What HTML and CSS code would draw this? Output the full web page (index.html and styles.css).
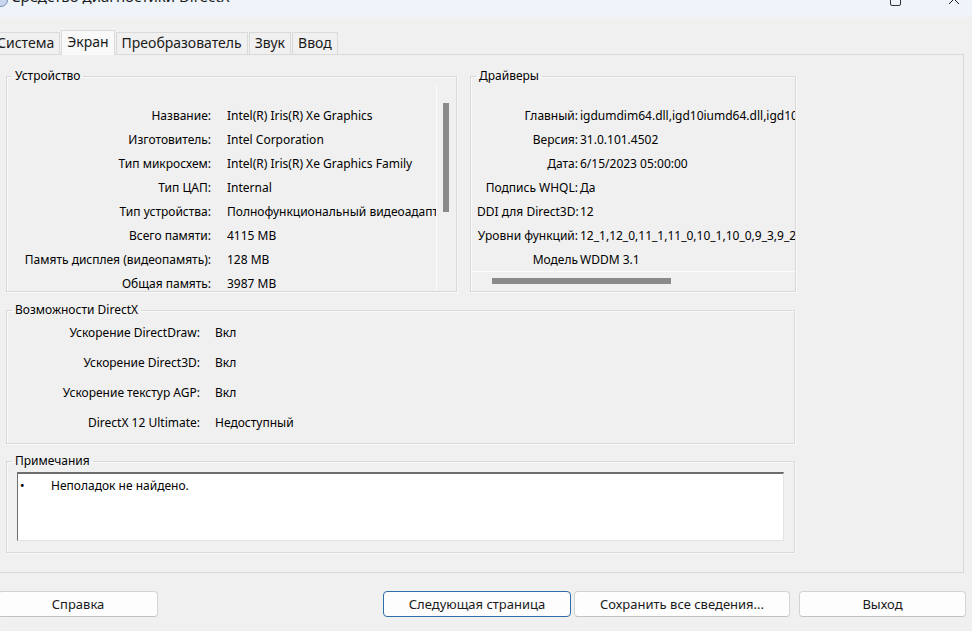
FILE: index.html
```html
<!DOCTYPE html>
<html lang="ru">
<head>
    <meta charset="UTF-8">
    <title>Средство диагностики DirectX</title>
    <link rel="stylesheet" href="styles.css">
</head>
<body>
    <div class="titlebar">
        <span class="app-icon"></span>
        <span class="title">Средство диагностики DirectX</span>
        <div class="controls">
            <span class="max-btn"></span>
            <svg class="close-btn" width="12" height="12" viewBox="0 0 12 12"><path d="M1 1 L11 11 M11 1 L1 11" stroke="#1a1a1a" stroke-width="1"/></svg>
        </div>
    </div>

    <div class="tabs">
        <div class="tab">Система</div>
        <div class="tab selected">Экран</div>
        <div class="tab">Преобразователь</div>
        <div class="tab">Звук</div>
        <div class="tab">Ввод</div>
    </div>

    <div class="panel">
        <div class="top-row">
            <fieldset class="group device">
                <legend>Устройство</legend>
                <div class="scroll-wrap">
                    <div class="list device-list">
                        <div class="row"><span class="label">Название:</span><span class="value">Intel(R) Iris(R) Xe Graphics</span></div>
                        <div class="row"><span class="label">Изготовитель:</span><span class="value">Intel Corporation</span></div>
                        <div class="row"><span class="label">Тип микросхем:</span><span class="value">Intel(R) Iris(R) Xe Graphics Family</span></div>
                        <div class="row"><span class="label">Тип ЦАП:</span><span class="value">Internal</span></div>
                        <div class="row"><span class="label">Тип устройства:</span><span class="value">Полнофункциональный видеоадаптер</span></div>
                        <div class="row"><span class="label">Всего памяти:</span><span class="value">4115 MB</span></div>
                        <div class="row"><span class="label">Память дисплея (видеопамять):</span><span class="value">128 MB</span></div>
                        <div class="row"><span class="label">Общая память:</span><span class="value">3987 MB</span></div>
                    </div>
                    <div class="vscroll"><div class="thumb"></div></div>
                </div>
            </fieldset>

            <fieldset class="group drivers">
                <legend>Драйверы</legend>
                <div class="list driver-list">
                    <div class="row"><span class="label">Главный:</span><span class="value">igdumdim64.dll,igd10iumd64.dll,igd10iumd64.dll</span></div>
                    <div class="row"><span class="label">Версия:</span><span class="value">31.0.101.4502</span></div>
                    <div class="row"><span class="label">Дата:</span><span class="value">6/15/2023 05:00:00</span></div>
                    <div class="row"><span class="label">Подпись WHQL:</span><span class="value">Да</span></div>
                    <div class="row"><span class="label">DDI для Direct3D:</span><span class="value">12</span></div>
                    <div class="row"><span class="label">Уровни функций:</span><span class="value">12_1,12_0,11_1,11_0,10_1,10_0,9_3,9_2,9_1</span></div>
                    <div class="row"><span class="label">Модель</span><span class="value">WDDM 3.1</span></div>
                </div>
                <div class="hscroll"><div class="thumb"></div></div>
            </fieldset>
        </div>

        <fieldset class="group dx">
            <legend>Возможности DirectX</legend>
            <div class="dx-list">
                <div class="row"><span class="label">Ускорение DirectDraw:</span><span class="value">Вкл</span></div>
                <div class="row"><span class="label">Ускорение Direct3D:</span><span class="value">Вкл</span></div>
                <div class="row"><span class="label">Ускорение текстур AGP:</span><span class="value">Вкл</span></div>
                <div class="row"><span class="label">DirectX 12 Ultimate:</span><span class="value">Недоступный</span></div>
            </div>
        </fieldset>

        <fieldset class="group notes">
            <legend>Примечания</legend>
            <div class="notes-box">
                <div class="note"><span class="bullet">•</span>Неполадок не найдено.</div>
            </div>
        </fieldset>
    </div>

    <div class="buttons">
        <button class="btn help">Справка</button>
        <div class="btn-group">
            <button class="btn next">Следующая страница</button>
            <button class="btn save">Сохранить все сведения...</button>
            <button class="btn exit">Выход</button>
        </div>
    </div>
</body>
</html>
```

FILE: styles.css
```css
body{
    margin: 0;
    background-color: #f0f0f0;
    color: #000;
    font-family: "Noto Sans", "Liberation Sans", sans-serif;
    font-size: 12px;
    overflow: hidden;
}
.titlebar{
    height: 17px;
    background-color: #eef4f9;
    display: flex;
    align-items: flex-start;
    overflow: hidden;
}
.app-icon{
    width: 12px;
    height: 12px;
    margin-left: -6px;
    margin-top: -7px;
    border-radius: 50%;
    border: 1px solid #7a8fb3;
    background-color: #c9d6ee;
}
.title{
    font-size: 15px;
    line-height: 20px;
    margin-top: -14px;
    margin-left: 3px;
    color: #1c1c1c;
}
.controls{
    margin-left: auto;
    display: flex;
    align-items: flex-start;
}
.max-btn{
    width: 9px;
    height: 9px;
    margin-top: -5px;
    border: 1px solid #333;
    border-radius: 2px;
    margin-right: 47px;
}
.close-btn{
    margin-top: -7px;
    margin-right: 12px;
}
.tabs{
    display: flex;
    align-items: flex-end;
    margin-top: 13px;
    margin-left: -9px;
    height: 24px;
    position: relative;
    z-index: 1;
}
.tab{
    height: 21px;
    line-height: 20px;
    padding: 0 5px;
    font-size: 14px;
    border: 1px solid #dadada;
    border-bottom: none;
    margin-right: 1px;
    color: #1a1a1a;
    background-color: #f0f0f0;
}
.tab.selected{
    height: 24px;
    line-height: 22px;
    background-color: #f9f9f9;
    margin-bottom: -1px;
}
.panel{
    margin: 0 8px 0 -1px;
    border: 1px solid #d9d9d9;
    padding: 13px 6px 19px 6px;
}
.top-row{
    display: flex;
    gap: 13px;
}
.group{
    margin: 0;
    padding: 0;
    border: 1px solid #d8d8d8;
    box-shadow: 1px 1px 0 #fafafa, inset 1px 1px 0 #fafafa;
    min-width: 0;
}
.group legend{
    margin-left: 5px;
    padding: 0 3px;
    line-height: 16px;
}
.device{
    width: 449px;
}
.drivers{
    width: 324px;
}
.scroll-wrap{
    display: flex;
    height: 207px;
}
.list{
    overflow: hidden;
    white-space: nowrap;
    padding-top: 19px;
    box-sizing: border-box;
}
.device-list{
    flex: 1;
    padding-left: 1px;
}
.row{
    display: flex;
    height: 24px;
    align-items: center;
}
.label{
    text-align: right;
    flex-shrink: 0;
}
.device-list .label{
    width: 203px;
    margin-right: 16px;
}
.vscroll{
    width: 19px;
    border-left: 1px solid #fbfbfb;
}
.vscroll .thumb{
    width: 6px;
    height: 109px;
    margin: 19px 0 0 6px;
    background-color: #8a8a8a;
}
.driver-list{
    height: 187px;
    padding-left: 6px;
}
.driver-list .label{
    width: 101px;
    margin-right: 2px;
}
.hscroll{
    height: 20px;
    border-top: 1px solid #fbfbfb;
    box-sizing: border-box;
    padding-top: 6px;
}
.hscroll .thumb{
    width: 179px;
    height: 6px;
    margin-left: 21px;
    background-color: #8a8a8a;
}
.dx{
    width: 787px;
    margin-top: 10px;
}
.dx-list{
    margin-top: -1px;
    padding-bottom: 6px;
}
.dx-list .row{
    height: 30px;
}
.dx-list .label{
    width: 193px;
    margin-right: 15px;
}
.notes{
    width: 767px;
    margin-top: 9px;
    padding: 3px 10px 11px 10px;
}
.notes legend{
    margin-left: -5px;
}
.notes-box{
    height: 63px;
    background-color: #fff;
    border-top: 2px solid #6d6d6d;
    border-left: 1px solid #6d6d6d;
    border-right: 1px solid #e3e3e3;
    border-bottom: 1px solid #e3e3e3;
    padding: 3px 0 0 2px;
}
.note{
    display: flex;
    align-items: center;
}
.bullet{
    width: 31px;
}
.buttons{
    display: flex;
    justify-content: space-between;
    margin: 18px 6px 0 -2px;
}
.btn-group{
    display: flex;
}
.btn{
    height: 26px;
    background-color: #fdfdfd;
    border: 1px solid #d3d3d3;
    border-bottom-color: #c2c2c2;
    border-radius: 4px;
    font-family: "Noto Sans", "Liberation Sans", sans-serif;
    font-size: 13px;
    color: #1a1a1a;
    padding: 0;
}
.help{
    width: 160px;
}
.next{
    width: 188px;
    border-color: #2f6ca8;
    margin-right: 3px;
}
.save{
    width: 216px;
    margin-right: 9px;
}
.exit{
    width: 167px;
}
```
